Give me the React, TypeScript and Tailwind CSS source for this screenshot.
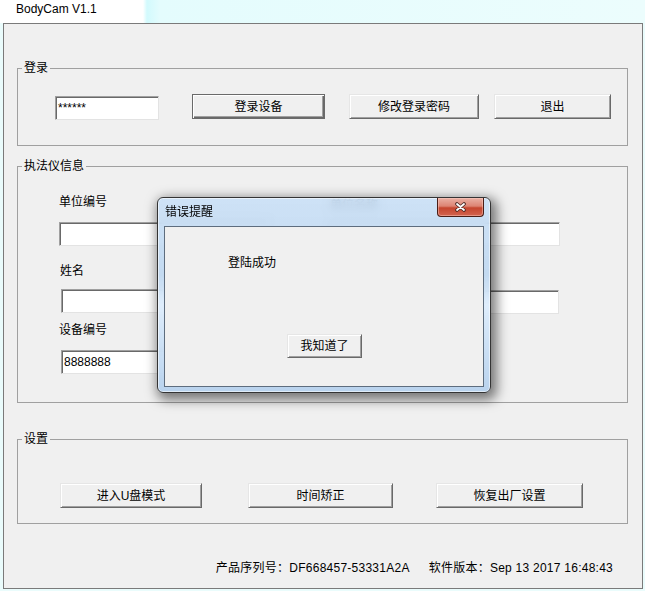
import React from "react";

const FONT = "font-['Liberation_Sans','Noto_Sans_CJK_SC',sans-serif]";

function Btn({
  children,
  w,
  primary,
}: {
  children: React.ReactNode;
  w: string;
  primary?: boolean;
}) {
  return (
    <div
      className={
        "flex h-[25px] shrink-0 items-center justify-center bg-[#f0f0f0] text-[12px] text-black " +
        w +
        (primary
          ? " border border-[#6a6a6a] shadow-[inset_1px_1px_0_#ffffff,inset_-1px_-1px_0_#696969,inset_-2px_-2px_0_#a0a0a0]"
          : " border border-t-[#e6e6e6] border-l-[#e6e6e6] border-b-[#696969] border-r-[#696969] shadow-[inset_1px_1px_0_#ffffff,inset_-1px_-1px_0_#a0a0a0]")
      }
    >
      {children}
    </div>
  );
}

function Field({ w, value }: { w: string; value?: string }) {
  return (
    <div
      className={
        "flex h-[24px] shrink-0 items-center border border-t-[#a0a0a0] border-l-[#a0a0a0] border-b-[#e3e3e3] border-r-[#e3e3e3] bg-white pl-[2px] text-[12px] text-black shadow-[inset_1px_1px_0_#696969] " +
        w
      }
    >
      {value}
    </div>
  );
}

function Group({
  title,
  h,
  className,
  children,
}: {
  title: string;
  h: string;
  className?: string;
  children: React.ReactNode;
}) {
  return (
    <div className={"relative border border-[#a0a0a0] " + h + " " + (className ?? "")}>
      <span className="absolute -top-[8px] left-[4px] bg-[#f0f0f0] px-[2px] text-[12px] leading-[14px] text-black">
        {title}
      </span>
      {children}
    </div>
  );
}

function ErrorDialog() {
  return (
    <div className="absolute left-[157px] top-[197px] flex h-[196px] w-[334px] flex-col rounded-[6px] border border-[#343434] bg-[linear-gradient(180deg,rgba(200,223,246,0.88)_0%,rgba(190,215,240,0.9)_40%,rgba(220,236,252,0.92)_55%,rgba(180,208,237,0.92)_100%)] shadow-[3px_4px_12px_3px_rgba(0,0,0,0.5),inset_0_0_0_1px_rgba(255,255,255,0.55)] backdrop-blur-[5px]">
      <div className="relative h-[28px] shrink-0">
        <span className="absolute left-[7px] top-[7px] text-[12px] leading-[14px] text-black">错误提醒</span>
        <div className="absolute right-[6px] top-0 flex h-[19px] w-[47px] items-center justify-center rounded-b-[4px] border border-t-0 border-[#4a1d16] bg-[linear-gradient(180deg,#eab0a4_0%,#dd8473_45%,#c5452e_55%,#d26450_100%)] shadow-[inset_0_0_0_1px_rgba(255,210,200,0.45)]">
          <svg width="13" height="10" viewBox="0 0 13 10">
            <path d="M3 2 L10 8 M10 2 L3 8" stroke="#4a2a26" strokeWidth="3.6" strokeLinecap="round" />
            <path d="M3 2 L10 8 M10 2 L3 8" stroke="#ffffff" strokeWidth="1.8" strokeLinecap="round" />
          </svg>
        </div>
      </div>
      <div className="mx-[6px] flex h-[161px] flex-col border border-[#5e6d7e] bg-[#f0f0f0] pl-[63px] pt-[29px]">
        <span className="text-[12px] leading-[14px] text-black">登陆成功</span>
        <div className="ml-[59px] mt-[64px] flex h-[24px] w-[75px] items-center justify-center border border-t-[#e6e6e6] border-l-[#e6e6e6] border-b-[#696969] border-r-[#696969] bg-[#f0f0f0] text-[12px] text-black shadow-[inset_1px_1px_0_#ffffff,inset_-1px_-1px_0_#a0a0a0]">
          我知道了
        </div>
      </div>
    </div>
  );
}

export default function App() {
  return (
    <div className={"relative h-[591px] w-[645px] overflow-hidden bg-[#eafcfc] " + FONT}>
      {/* window title strip */}
      <div className="h-[23px] bg-[linear-gradient(90deg,#ffffff_0px,#ffffff_143px,#d2fafd_147px,#e4fcfd_160px,#ecfdfd_100%)] pl-[16px] pt-[2px] text-[12px] leading-[15px] text-black">
        BodyCam V1.1
      </div>

      <div className="ml-[3px] flex h-[566px] w-[640px] flex-col border border-[#7a7a7a] bg-[#f0f0f0] pl-[13px] pr-[14px]">
        <Group title="登录" h="h-[78px]" className="mt-[44px]">
          <div className="flex items-start pl-[37px] pt-[25px]">
            <div className="mt-[2px]">
              <Field w="w-[104px]" value="******" />
            </div>
            <div className="ml-[33px]">
              <Btn w="w-[133px]" primary>
                登录设备
              </Btn>
            </div>
            <div className="ml-[24px]">
              <Btn w="w-[130px]">修改登录密码</Btn>
            </div>
            <div className="ml-[15px]">
              <Btn w="w-[117px]">退出</Btn>
            </div>
          </div>
        </Group>

        <Group title="执法仪信息" h="h-[237px]" className="mt-[20px]">
          <div className="flex pl-[41px] pt-[28px] text-[12px] leading-[14px] text-black">
            <div className="flex w-[211px] flex-col">
              <span>单位编号</span>
              <div className="mt-[13px]">
                <Field w="w-[211px]" />
              </div>
              <span className="ml-[1px] mt-[18px]">姓名</span>
              <div className="ml-[2px] mt-[11px]">
                <Field w="w-[209px]" />
              </div>
              <span className="mt-[10px]">设备编号</span>
              <div className="ml-[2px] mt-[13px]">
                <Field w="w-[209px]" value="8888888" />
              </div>
            </div>
            <div className="ml-[60px] flex w-[230px] flex-col">
              <span className="mt-[3px]">单位名称</span>
              <div className="mt-[10px]">
                <Field w="w-[230px]" />
              </div>
              <span className="mt-[18px]">警员编号</span>
              <div className="mt-[12px]">
                <Field w="w-[229px]" />
              </div>
            </div>
          </div>
        </Group>

        <Group title="设置" h="h-[85px]" className="mt-[36px]">
          <div className="flex pl-[42px] pt-[43px]">
            <Btn w="w-[142px]">进入U盘模式</Btn>
            <div className="ml-[46px]">
              <Btn w="w-[145px]">时间矫正</Btn>
            </div>
            <div className="ml-[43px]">
              <Btn w="w-[147px]">恢复出厂设置</Btn>
            </div>
          </div>
        </Group>

        <div className="mt-[37px] flex justify-end pr-[15px] text-[12px] leading-[14px] tracking-[0.25px] text-black">
          <span>产品序列号：DF668457-53331A2A</span>
          <span className="ml-[19px]">软件版本：Sep 13 2017 16:48:43</span>
        </div>
      </div>

      <ErrorDialog />
    </div>
  );
}
